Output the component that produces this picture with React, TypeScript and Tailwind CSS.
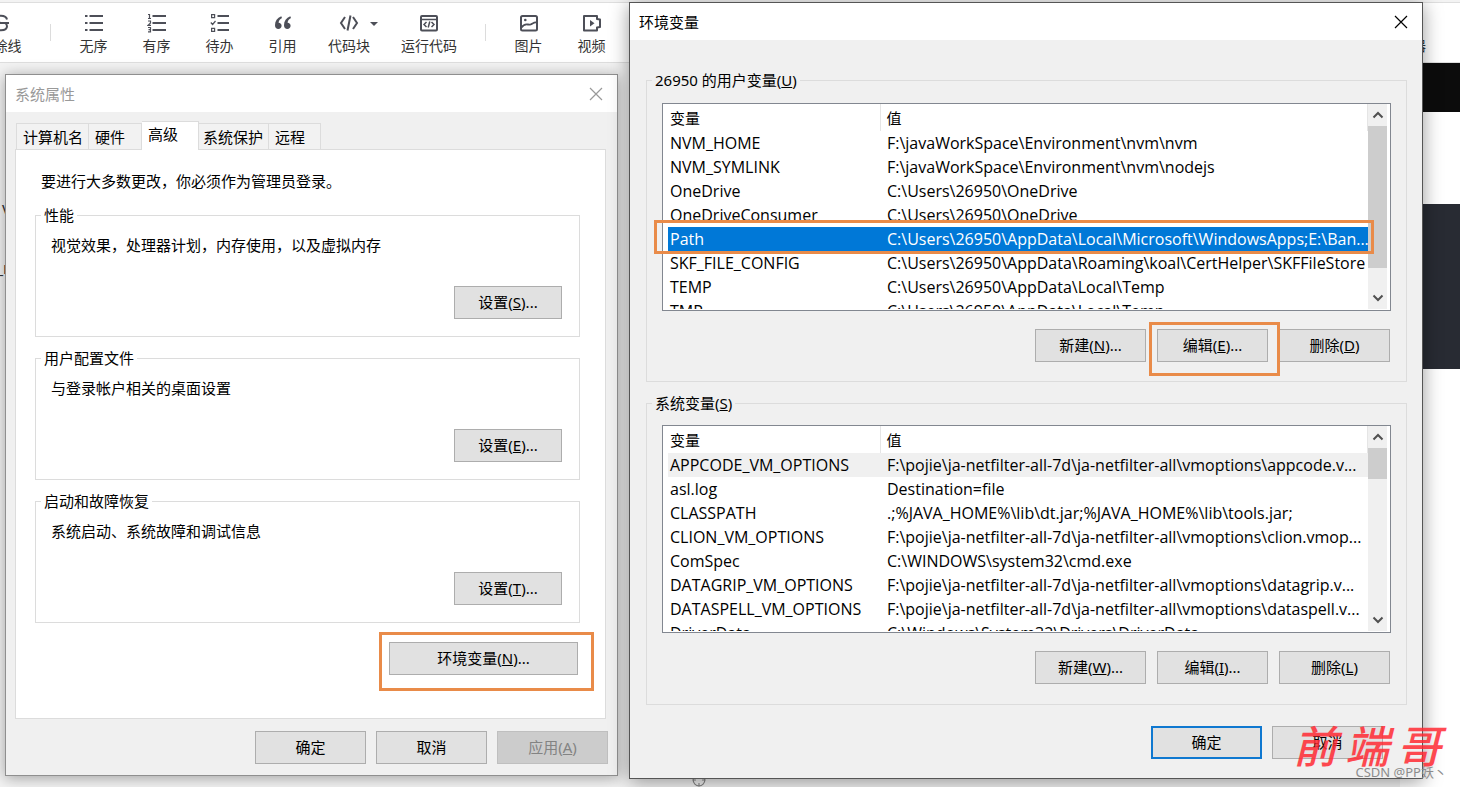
import type { ReactNode } from "react";
import clsx from "clsx";
import { Crosshair } from "lucide-react";

interface Variable {
	name: string;
	value: string;
}

const userVariables: Variable[] = [
	{ name: "NVM_HOME", value: "F:\\javaWorkSpace\\Environment\\nvm\\nvm" },
	{ name: "NVM_SYMLINK", value: "F:\\javaWorkSpace\\Environment\\nvm\\nodejs" },
	{ name: "OneDrive", value: "C:\\Users\\26950\\OneDrive" },
	{ name: "OneDriveConsumer", value: "C:\\Users\\26950\\OneDrive" },
	{
		name: "Path",
		value: "C:\\Users\\26950\\AppData\\Local\\Microsoft\\WindowsApps;E:\\Ban...",
	},
	{
		name: "SKF_FILE_CONFIG",
		value: "C:\\Users\\26950\\AppData\\Roaming\\koal\\CertHelper\\SKFFileStore",
	},
	{ name: "TEMP", value: "C:\\Users\\26950\\AppData\\Local\\Temp" },
	{ name: "TMP", value: "C:\\Users\\26950\\AppData\\Local\\Temp" },
];

const systemVariables: Variable[] = [
	{
		name: "APPCODE_VM_OPTIONS",
		value: "F:\\pojie\\ja-netfilter-all-7d\\ja-netfilter-all\\vmoptions\\appcode.v...",
	},
	{ name: "asl.log", value: "Destination=file" },
	{ name: "CLASSPATH", value: ".;%JAVA_HOME%\\lib\\dt.jar;%JAVA_HOME%\\lib\\tools.jar;" },
	{
		name: "CLION_VM_OPTIONS",
		value: "F:\\pojie\\ja-netfilter-all-7d\\ja-netfilter-all\\vmoptions\\clion.vmop...",
	},
	{ name: "ComSpec", value: "C:\\WINDOWS\\system32\\cmd.exe" },
	{
		name: "DATAGRIP_VM_OPTIONS",
		value: "F:\\pojie\\ja-netfilter-all-7d\\ja-netfilter-all\\vmoptions\\datagrip.v...",
	},
	{
		name: "DATASPELL_VM_OPTIONS",
		value: "F:\\pojie\\ja-netfilter-all-7d\\ja-netfilter-all\\vmoptions\\dataspell.v...",
	},
	{ name: "DriverData", value: "C:\\Windows\\System32\\Drivers\\DriverData" },
];

/* ---------- editor toolbar ---------- */

function Icon({ children }: { children: ReactNode }) {
	return (
		<svg
			width="20"
			height="20"
			viewBox="0 0 20 20"
			fill="none"
			stroke="currentColor"
			strokeWidth="2"
			aria-hidden="true"
		>
			{children}
		</svg>
	);
}

const icons = {
	strike: (
		<Icon>
			<path d="M16 6.5C15.5 4 13 2.8 10 2.8 6.500 2.8 4.500 4.300 4.500 6.500c0 2 2 3 5.500 3.500M4 13.500c.5 2.500 3 3.700 6 3.700 3.500 0 6-1.500 6-4 0-1.500-.8-2.500-2-3.200M2 10h16" />
		</Icon>
	),
	unordered: (
		<Icon>
			<path d="M5.500 3H19M5.500 10H19M5.500 17H19" />
			<path d="M1 3h2.500M1 10h2.500M1 17h2.500" />
		</Icon>
	),
	ordered: (
		<Icon>
			<path d="M5.500 3H19M5.500 10H19M5.500 17H19" />
			<path
				strokeWidth="1.200"
				d="M1 1.500h1.500v4M1 5.500h3M1 8h2.500v2L1 12.300h3M1 14.500h2.500v4.300H1M1.500 16.600h2"
			/>
		</Icon>
	),
	todo: (
		<Icon>
			<path d="M7.500 3H19M7.500 10H19M7.500 17H19" />
			<path strokeWidth="1.200" d="M1.600 1.600h3v3h-3zM.8 9.500l1.800 2L5.500 8M1.600 15.400h3v3h-3z" />
		</Icon>
	),
	quote: (
		<Icon>
			<path
				fill="currentColor"
				stroke="none"
				d="M8.300 3.200C4.200 5 2 8 2 12.200 2 14.800 3.500 16 5.300 16c1.900 0 3.300-1.300 3.300-3.200 0-1.800-1.200-3-3-3.100.2-1.900 1.200-3.300 3.400-4.600zM17.300 3.200C13.200 5 11 8 11 12.200c0 2.600 1.500 3.800 3.300 3.800 1.900 0 3.300-1.300 3.300-3.200 0-1.800-1.200-3-3-3.100.2-1.900 1.200-3.300 3.400-4.600z"
			/>
		</Icon>
	),
	code: (
		<Icon>
			<path d="M6 4L2 10l4 6M14 4l4 6-4 6M11.500 2.500l-3 15" />
		</Icon>
	),
	run: (
		<Icon>
			<rect x="2" y="3" width="16" height="14.500" rx="1" />
			<path strokeWidth="1.500" d="M2 6.500h16M7.500 9L5 11.500 7.500 14M12.500 9l2.500 2.500-2.500 2.500M10.800 8.500l-1.600 6" />
		</Icon>
	),
	image: (
		<Icon>
			<rect x="2" y="3" width="16" height="14.500" rx="1.500" />
			<path strokeWidth="1.800" d="M2.500 14.500C6 9 9 12.500 11.500 11.500S15 9 17.500 9.500" />
			<circle cx="6.300" cy="7" r="1.300" fill="currentColor" stroke="none" />
		</Icon>
	),
	video: (
		<Icon>
			<path d="M2 3h13v3l3 .5v7.500l-3 .5v3H2z" strokeLinejoin="round" />
			<path d="M8 7v6.500l4.500-3.250z" fill="currentColor" stroke="none" />
		</Icon>
	),
};

interface ToolProps {
	label: string;
	icon?: ReactNode;
	caret?: boolean;
	className?: string;
}

function Tool({ label, icon, caret, className = "w-[63px]" }: ToolProps) {
	return (
		<button
			type="button"
			className={clsx("relative flex shrink-0 flex-col items-center gap-[3px] pt-[3px] text-[#4d4f58]", className)}
		>
			<span className="h-5">{icon}</span>
			<span className="text-sm leading-5 whitespace-nowrap text-[#333]">{label}</span>
			{caret && (
				<svg className="absolute top-3 right-1.5" width="8" height="4" viewBox="0 0 8 4" aria-hidden="true">
					<path d="M0 0h8L4 4z" fill="currentColor" />
				</svg>
			)}
		</button>
	);
}

function Divider() {
	return <span className="mx-[11px] h-[17px] w-px shrink-0 bg-[#dcdcdc]" />;
}

function Editor() {
	return (
		<div className="flex h-full flex-col bg-[#f3f3f3]">
			<div className="mt-0.5 flex h-[61px] shrink-0 items-center justify-between border-y border-[#dedede] bg-white">
				<div className="-ml-[38px] flex items-center">
					<Tool label="删除线" icon={icons.strike} className="w-[77px]" />
					<Divider />
					<Tool label="无序" icon={icons.unordered} />
					<Tool label="有序" icon={icons.ordered} />
					<Tool label="待办" icon={icons.todo} />
					<Tool label="引用" icon={icons.quote} />
					<Tool label="代码块" icon={icons.code} caret className="w-[70px]" />
					<Tool label="运行代码" icon={icons.run} className="w-[90px]" />
					<Divider />
					<Tool label="图片" icon={icons.image} />
					<Tool label="视频" icon={icons.video} />
				</div>
				<Tool label="编辑器" className="mr-[34px] w-[42px]" />
			</div>
			<div className="flex min-h-0 flex-1">
				<div className="flex flex-1 flex-col justify-between pt-[133px] text-base text-[#333]">
					<div className="flex flex-col gap-9">
						<p className="pl-0.5 leading-6">v</p>
						<p className="-ml-1 leading-6">_r</p>
					</div>
					<Crosshair className="ml-[692px] text-[#888]" size={14} />
				</div>
				<div className="flex w-[60px] flex-col bg-white">
					<div className="h-[49px] bg-[#0c0c0c]" />
					<div className="mt-[92px] h-[165px] bg-[#282b33]" />
				</div>
			</div>
		</div>
	);
}

/* ---------- dialog parts ---------- */

interface DialogButtonProps {
	label: string;
	accessKey?: string;
	more?: boolean;
	primary?: boolean;
	disabled?: boolean;
	className?: string;
}

function DialogButton({ label, accessKey, more, primary, disabled, className = "w-[111px]" }: DialogButtonProps) {
	return (
		<button
			type="button"
			disabled={disabled}
			className={clsx(
				"h-[33px] pb-0.5 leading-5 whitespace-nowrap",
				primary ? "border-2 border-[#0f78d0]" : "border",
				disabled ? "border-[#bfbfbf] bg-[#ccc] text-[#838383]" : "bg-[#e1e1e1]",
				!primary && !disabled && "border-[#adadad]",
				className,
			)}
		>
			{label}
			{accessKey && (
				<>
					(<u>{accessKey}</u>)
				</>
			)}
			{more && "..."}
		</button>
	);
}

// orange marker frame, drawn over the control it points at
function Marker({ className }: { className: string }) {
	return <span className={clsx("pointer-events-none absolute z-10 border-3 border-[#e98b49]", className)} />;
}

function TitleBar({ title, inactive }: { title: string; inactive?: boolean }) {
	return (
		<div
			className={clsx(
				"flex h-[37px] items-center justify-between bg-white pr-[14px] pl-[9px]",
				inactive && "text-[#999]",
			)}
		>
			<h2 className="leading-5">{title}</h2>
			<button type="button" aria-label="关闭">
				<svg width="14" height="14" viewBox="0 0 14 14" stroke="currentColor" strokeWidth="1.200" aria-hidden="true">
					<path d="M1 1l12 12M13 1L1 13" />
				</svg>
			</button>
		</div>
	);
}

function Group({ legend, children }: { legend: ReactNode; children: ReactNode }) {
	return (
		<fieldset className="min-w-0 border border-[#dcdcdc]">
			<legend className="ml-[5px] px-[3px] leading-5">{legend}</legend>
			{children}
		</fieldset>
	);
}

function SettingGroup({ title, text, accessKey }: { title: string; text: string; accessKey: string }) {
	return (
		<Group legend={title}>
			<div className="flex flex-col pt-2.5 pr-[17px] pb-[17px] pl-[15px]">
				<p className="leading-5">{text}</p>
				<DialogButton label="设置" accessKey={accessKey} more className="mt-[31px] w-[108px] self-end" />
			</div>
		</Group>
	);
}

/* ---------- system properties ---------- */

const tabs = [
	{ label: "计算机名", size: "w-[73px] border-l pl-1.5" },
	{ label: "硬件", size: "w-[53px] pl-1.5" },
	{ label: "高级", size: "w-[57px] pl-1.5" },
	{ label: "系统保护", size: "w-[70px] pl-1" },
	{ label: "远程", size: "w-[52px] pl-1.5" },
];

function SystemProperties() {
	return (
		<section className="absolute top-[74px] left-[5px] w-[613px] border border-[#8f8f8f] bg-[#f0f0f0] shadow-[0_2px_14px_rgba(0,0,0,0.35)]">
			<TitleBar title="系统属性" inactive />
			<div className="pt-[9px] pr-[11px] pl-[9px]">
				<div role="tablist" className="flex items-end pl-px">
					{tabs.map((tab) => {
						const selected = tab.label === "高级";
						return (
							<button
								key={tab.label}
								type="button"
								role="tab"
								aria-selected={selected}
								className={clsx(
									"border-t border-r border-[#dcdcdc] text-left leading-5 whitespace-nowrap",
									tab.size,
									selected ? "relative -mb-px h-[29px] bg-white pb-1" : "h-[26px] bg-[#f2f2f2]",
								)}
							>
								{tab.label}
							</button>
						);
					})}
				</div>
				<div className="flex flex-col gap-[11px] border border-[#dcdcdc] bg-white pt-[21px] pr-[25px] pb-[43px] pl-[19px]">
					<p className="mb-[3px] pl-1.5 leading-5">要进行大多数更改，你必须作为管理员登录。</p>
					<SettingGroup title="性能" text="视觉效果，处理器计划，内存使用，以及虚拟内存" accessKey="S" />
					<SettingGroup title="用户配置文件" text="与登录帐户相关的桌面设置" accessKey="E" />
					<SettingGroup title="启动和故障恢复" text="系统启动、系统故障和调试信息" accessKey="T" />
					<div className="relative mt-2 mr-0.5 flex self-end">
						<DialogButton label="环境变量" accessKey="N" more className="w-[189px]" />
						<Marker className="-top-2.5 -right-4 -bottom-4 -left-2.5" />
					</div>
				</div>
			</div>
			<div className="flex justify-end gap-2.5 pt-3 pr-[9px] pb-[11px]">
				<DialogButton label="确定" />
				<DialogButton label="取消" />
				<DialogButton label="应用" accessKey="A" disabled />
			</div>
		</section>
	);
}

/* ---------- environment variables ---------- */

interface VariableListProps {
	variables: Variable[];
	selected?: string;
	hovered?: string;
	thumb: string;
}

function VariableList({ variables, selected, hovered, thumb }: VariableListProps) {
	return (
		<div className="relative">
			<div className="flex h-[208px] overflow-hidden border border-[#828790] bg-white pr-[3px] pb-px">
				<div className="min-w-0 flex-1 overflow-hidden pl-[5px]">
					<table className="w-full table-fixed border-collapse text-left whitespace-nowrap">
						<thead>
							<tr className="h-[27px]">
								<th className="w-[212px] border-r border-[#e5e5e5] p-0 pl-0.5 leading-5 font-normal">变量</th>
								<th className="border-r border-[#e5e5e5] p-0 pl-1.5 leading-5 font-normal">值</th>
							</tr>
						</thead>
						<tbody className="font-['Open_Sans',sans-serif] text-base">
							{variables.map((v) => (
								<tr
									key={v.name}
									className={clsx(
										"h-6",
										v.name === selected && "bg-[#0078d7] text-white",
										v.name === hovered && "bg-[#f0f0f0]",
									)}
								>
									<td className="p-0 pl-0.5 leading-5">{v.name}</td>
									<td className="p-0 pl-[7px] leading-5">{v.value}</td>
								</tr>
							))}
						</tbody>
					</table>
				</div>
				<div className="flex w-[19px] flex-col items-center bg-[#f0f0f0] text-[#505050]">
					<svg className="my-[6px] shrink-0" width="12" height="10" viewBox="0 0 12 10" fill="none" aria-hidden="true">
						<path d="M1.500 7.500L6 3l4.500 4.500" stroke="currentColor" strokeWidth="2" />
					</svg>
					<div className={clsx("w-full bg-[#cdcdcd]", thumb)} />
					<svg className="mt-auto mb-[6px] shrink-0" width="12" height="10" viewBox="0 0 12 10" fill="none" aria-hidden="true">
						<path d="M1.500 2.500L6 7l4.500-4.500" stroke="currentColor" strokeWidth="2" />
					</svg>
				</div>
			</div>
			{selected && <Marker className="top-[117px] right-[17px] -left-2 h-[34px]" />}
		</div>
	);
}

function EnvironmentVariables() {
	return (
		<section className="absolute top-0.5 left-[629px] w-[794px] border border-[#555] bg-[#f0f0f0] shadow-[0_3px_18px_rgba(0,0,0,0.4)]">
			<TitleBar title="环境变量" />
			<div className="flex flex-col gap-[11px] pt-[30px] pr-[15px] pl-4">
				<Group
					legend={
						<>
							26950 的用户变量(<u>U</u>)
						</>
					}
				>
					<div className="pt-[13px] pr-[15px] pb-[19px] pl-[15px]">
						<VariableList variables={userVariables} selected="Path" thumb="h-[142px]" />
						<div className="mt-[18px] flex justify-end gap-[11px] pr-px">
							<DialogButton label="新建" accessKey="N" more />
							<div className="relative flex">
								<DialogButton label="编辑" accessKey="E" more />
								<Marker className="-top-[7px] -right-3 -bottom-3.5 -left-2" />
							</div>
							<DialogButton label="删除" accessKey="D" />
						</div>
					</div>
				</Group>
				<Group
					legend={
						<>
							系统变量(<u>S</u>)
						</>
					}
				>
					<div className="px-[15px] pt-3 pb-5">
						<VariableList variables={systemVariables} hovered="APPCODE_VM_OPTIONS" thumb="h-[31px]" />
						<div className="mt-[18px] flex justify-end gap-[11px] pr-px">
							<DialogButton label="新建" accessKey="W" more />
							<DialogButton label="编辑" accessKey="I" more />
							<DialogButton label="删除" accessKey="L" />
						</div>
					</div>
				</Group>
			</div>
			<div className="flex justify-end gap-2.5 pt-[21px] pr-[39px] pb-[19px]">
				<DialogButton label="确定" primary />
				<DialogButton label="取消" />
			</div>
		</section>
	);
}

function Watermark() {
	return (
		<div className="pointer-events-none absolute right-[13px] bottom-[7px] flex flex-col items-end">
			<div className="flex gap-2 pr-1.5 text-[44px] leading-[52px] font-medium text-[#ff2a33]/85 italic">
				<span>前</span>
				<span>端</span>
				<span>哥</span>
			</div>
			<span className="-mt-2 text-[13px] leading-4 text-[#8c8c8c]">CSDN @PP妖丶</span>
		</div>
	);
}

export default function App() {
	return (
		<main className="relative h-screen min-h-[780px] w-full overflow-hidden font-['Noto_Sans','Noto_Sans_CJK_SC',sans-serif] text-[15px] text-black">
			<Editor />
			<SystemProperties />
			<EnvironmentVariables />
			<Watermark />
		</main>
	);
}
